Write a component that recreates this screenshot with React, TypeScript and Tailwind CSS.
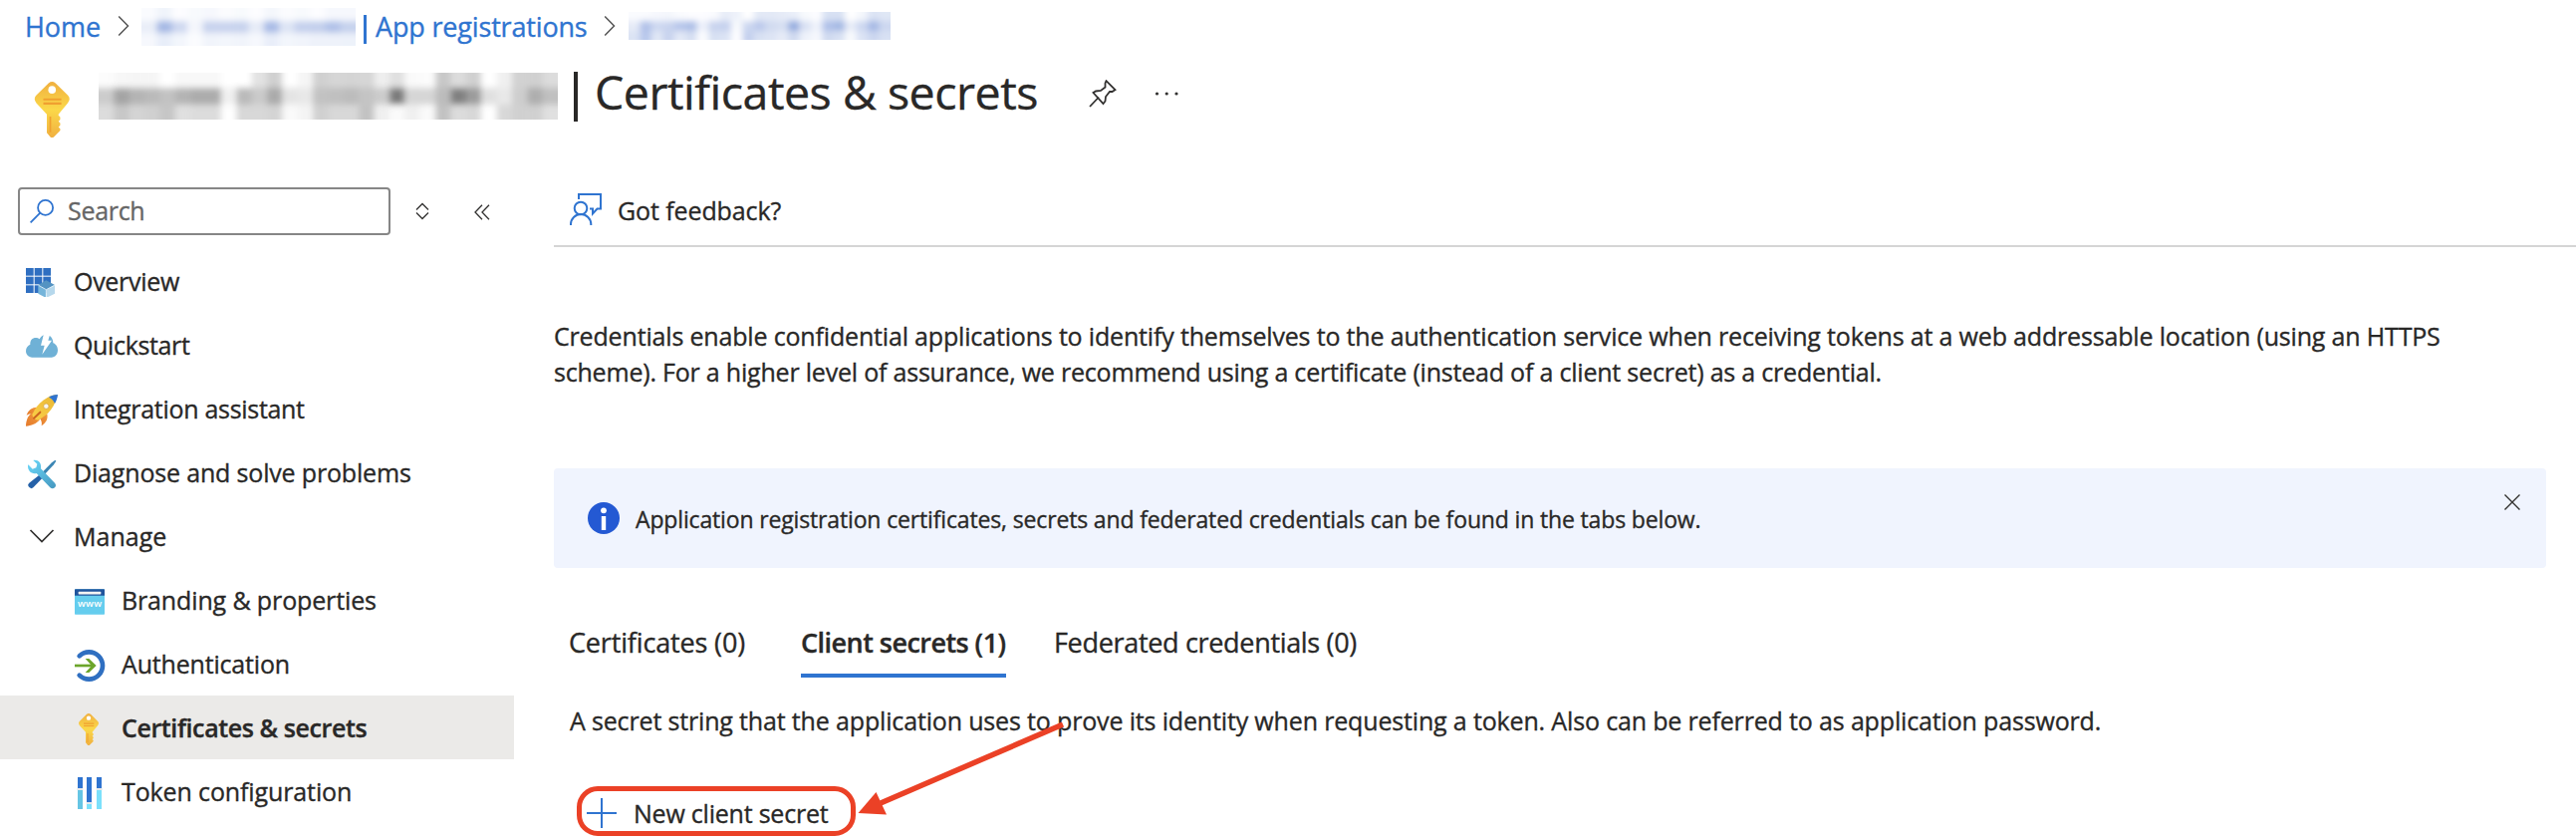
import type { ReactNode } from "react";

const BLUE = "#2f74d0";

function KeyIcon({ className }: { className: string }) {
  return (
    <svg viewBox="18 402 96 96" className={className}>
      <defs>
        <linearGradient id="keyFill" x1="0" y1="0" x2="0" y2="1">
          <stop offset="0" stopColor="#f0b040" />
          <stop offset="0.5" stopColor="#fbd849" />
          <stop offset="1" stopColor="#f0b040" />
        </linearGradient>
      </defs>
      <path
        fill="url(#keyFill)"
        d="M57 404.500Q63 399.500 69 404.500L90 425Q96 431 90 439L74 458V460L77 463V467L74 470L77 473V477L74 480L77 483V486L66 497Q63 499 60 497L54 490V458L36 439Q30 431 36 425Z"
      />
      <ellipse cx="63" cy="416" rx="6.500" ry="6.500" fill="#fff" />
      <path d="M48 432.500H79M48 439.500H79" stroke="#f0a030" strokeWidth="3.500" />
      <path d="M60 462V489" stroke="#f0a030" strokeWidth="3" />
    </svg>
  );
}

function OverviewIcon() {
  return (
    <svg viewBox="30 12 96 96" className="size-8">
      {[0, 1, 2].map((r) =>
        [0, 1, 2].map((c) => (
          <rect key={`${r}${c}`} x={30 + c * 26} y={21 + r * 26} width="23" height="23" fill="#2f6fc1" />
        ))
      )}
      <path d="M91 58L117 72L91 86L67 72Z" fill="#5493c2" />
      <path d="M67 72L91 86V111L67 98Z" fill="#74b4da" />
      <path d="M117 72L91 86V111L117 98Z" fill="#b6d8ec" />
      <path d="M68 73L91 86L116 73M91 86V110" stroke="#e8f4fa" strokeWidth="2.500" fill="none" />
    </svg>
  );
}

function QuickstartIcon() {
  return (
    <svg viewBox="30 204 96 96" className="size-8">
      <path
        fill="#6fb1d6"
        d="M49 290C38 290 30 282 30 271C30 261 36 254 43 251C42 239 49 231 60 231C64 231 68 232 71 235C75 226 82 222 90 222C103 222 112 232 112 247C120 249 126 258 126 268C126 281 118 290 107 290Z"
      />
      <path fill="#fff" d="M84 219H103L97 239H108L79 281L86 254H75Z" />
    </svg>
  );
}

function RocketIcon() {
  return (
    <svg viewBox="30 396 96 96" className="size-8 overflow-visible">
      <defs>
        <linearGradient id="rocketFin" x1="1" y1="0" x2="0" y2="1">
          <stop offset="0" stopColor="#f09a3c" />
          <stop offset="1" stopColor="#e57a2c" />
        </linearGradient>
        <linearGradient id="rocketBody" x1="1" y1="0" x2="0" y2="1">
          <stop offset="0" stopColor="#e8b634" />
          <stop offset="1" stopColor="#fbd048" />
        </linearGradient>
      </defs>
      <path fill="url(#rocketFin)" d="M72 441C54 437 38 445 32 464C42 459 50 459 60 463Z" />
      <path fill="url(#rocketFin)" d="M94 460C97 474 92 487 77 496C79 486 77 479 70 472Z" />
      <path fill="url(#rocketFin)" d="M50 456C35 465 30 482 30 497C46 496 62 490 72 477Z" />
      <path fill="url(#rocketBody)" d="M125 402C98 404 66 424 49 462C50 471 56 478 66 479C98 464 120 434 125 402Z" />
      <path fill={BLUE} d="M126 402C115 402 106 405 99 410C107 413 114 420 117 429C122 421 125 412 126 402Z" />
      <circle cx="91" cy="437" r="8" fill="#f7f5ef" stroke="#d39b2a" strokeWidth="2" />
      <path d="M54 473L73 455" stroke="#cc6420" strokeWidth="6" strokeLinecap="round" />
    </svg>
  );
}

function ToolsIcon() {
  return (
    <svg viewBox="30 588 96 96" className="size-8 overflow-visible">
      <defs>
        <linearGradient id="wrenchFill" x1="0" y1="0" x2="1" y2="1">
          <stop offset="0" stopColor="#6bd8fa" />
          <stop offset="1" stopColor="#4597bf" />
        </linearGradient>
      </defs>
      <path d="M118 599L121 602L114 613L84 645L77 638L108 607Z" fill="#3b86b4" />
      <path d="M73 642L82 651L52 682Q47 687 41 682L38 679Q34 674 39 669Z" fill="#2561a8" />
      <path
        fill="url(#wrenchFill)"
        d="M52 600C66 597 78 608 75 625L117 668Q123 675 117 682Q110 688 103 682L62 639C48 643 35 632 36 616L37 613L50 626L61 622L64 611Z"
      />
    </svg>
  );
}

function BrandingIcon() {
  return (
    <svg viewBox="18 12 96 96" className="size-8">
      <rect x="21" y="28" width="90" height="76" rx="2" fill="#65cdee" />
      <path d="M23 28H109Q111 28 111 30V47H21V30Q21 28 23 28Z" fill="#20549c" />
      <rect x="32" y="35.500" width="68" height="8" rx="2" fill="#f4f4f4" />
      <text x="66" y="81" textAnchor="middle" fontSize="29" fontWeight="600" fill="#fff" fontFamily="Open Sans, sans-serif" textLength="72">
        www
      </text>
    </svg>
  );
}

function AuthenticationIcon() {
  return (
    <svg viewBox="18 204 96 96" className="size-8 overflow-visible">
      <path d="M35 229A41 41 0 1 1 35 287" fill="none" stroke="#2f6fc1" strokeWidth="14" strokeLinecap="round" />
      <path d="M21 258H78" stroke="#6ca52b" strokeWidth="8" />
      <path d="M53 237H64L86 258L64 279H53L72 258Z" fill="#6ca52b" />
    </svg>
  );
}

function TokenIcon() {
  return (
    <svg viewBox="18 588 96 96" className="size-8 overflow-visible">
      <rect x="30" y="594" width="15" height="34" fill={BLUE} />
      <rect x="30" y="632" width="15" height="58" fill="#66c5e4" />
      <rect x="57" y="594" width="15" height="76" fill={BLUE} />
      <rect x="57" y="675" width="15" height="15" fill="#7be0fb" />
      <rect x="87" y="594" width="15" height="34" fill={BLUE} />
      <rect x="87" y="632" width="15" height="58" fill="#7be0fb" />
      <rect x="28" y="627" width="18" height="6" rx="1" fill="#e4e8ea" />
      <rect x="56" y="669" width="18" height="6" rx="1" fill="#e4e8ea" />
      <rect x="86" y="627" width="18" height="6" rx="1" fill="#e4e8ea" />
    </svg>
  );
}

function ManageChevron() {
  return (
    <svg viewBox="0 0 32 32" className="size-8">
      <path d="M4.500 10L16 21.500L27.500 10" fill="none" stroke="#323130" strokeWidth="1.700" />
    </svg>
  );
}

function BreadcrumbChevron() {
  return (
    <svg viewBox="0 0 12 20" className="h-5 w-3 shrink-0">
      <path d="M1.200 0.500L10.500 10L1.200 19.500" fill="none" stroke="#555" strokeWidth="1.500" />
    </svg>
  );
}

/* Name hidden behind a coarse mosaic. Each row is a list of tile colours. */
function Mosaic({ id, width, heights, rows, className }: { id: string; width: number; heights: number[]; rows: string[][]; className: string }) {
  const total = heights.reduce((a, b) => a + b, 0);
  return (
    <svg viewBox={`0 0 ${width} ${total}`} className={className}>
      <filter id={id} x="0" y="0" width="100%" height="100%">
        <feGaussianBlur stdDeviation="3" />
      </filter>
      <g filter={`url(#${id})`}>
        {rows.map((row, r) => {
          const y = heights.slice(0, r).reduce((a, b) => a + b, 0);
          const first = r === 0;
          const last = r === rows.length - 1;
          const w = width / row.length;
          return row.map((color, c) => (
            <rect
              key={`${r}-${c}`}
              x={c * w - (c === 0 ? 10 : 0)}
              y={y - (first ? 10 : 0)}
              width={w + 0.5 + (c === 0 || c === row.length - 1 ? 10 : 0)}
              height={heights[r] + 0.5 + (first || last ? 10 : 0)}
              fill={`#${color}`}
            />
          ));
        })}
      </g>
    </svg>
  );
}

const gray = (s: string) => s.split(" ").map((v) => v + v + v);
const tiles = (s: string) => s.split(" ");

const titleRows = [
  gray("fc f7 f5 f5 ff f8 f8 f8 ff ff e2 d0 ff f5 d0 d6 d4 d6 ee e0 fa fc c8 dc d0 ff f0 d2 d0 dc"),
  gray("cc a4 b4 ba c2 b4 ac ac f0 ba ca aa e4 e8 c2 c0 bc c4 cc 7a d6 d6 bc 80 9c e0 e8 ce ae c0"),
  gray("dc c8 d4 d0 c6 e0 dc dc ff d8 d8 d4 fa f4 d0 d8 d8 c2 f0 fa f0 fa c2 dc d8 ff d8 d0 d0 e0"),
];
const tenantRows = [
  tiles("fafbfe f0f4fb fdfdff f8fafd f6f8fd fbfcfe f8fafd fdfdff f4f7fc fbfcfe f8fafd fdfdff f6f8fd f6f8fd"),
  tiles("e9eef8 a4b8e4 ced8f0 f4f6fc c8d3ee c8d3ee c6d2ed e6ebf7 a8bbe6 dde4f4 c4d0ed c2cfec b0c1e8 c5d1ed"),
  tiles("f6f8fd e8eef9 f3f6fc fbfcfe f1f4fb f3f6fc f1f4fb f6f8fd e9eef9 f3f6fc f1f4fb eef2fa eef2fa edf2fa"),
];
const appRows = [
  tiles("fafbfe fafbfe f6f8fd f4f7fc fafbfe fdfdff fdfdff fafbfe e8edf8 eef2fa ffffff e3e9f6 e3e9f6 e6ebf7 eaeff9 f8fafd fdfdff d8e1f3 d8e1f3 ffffff f4f7fc dbe3f4 e0e7f5"),
  tiles("e6ebf7 b0c1e8 ccd7f0 c8d3ee b4c4ea aabde6 ecf0fa c8d3ee c4d0ee f8fafd ccd7f0 bac8eb d0daf0 d6dff2 92aade d8e0f3 eef2fa aec0e8 a2b7e3 e6ebf7 ccd7f0 a4b8e4 ccd7f0"),
  tiles("dbe3f4 b8c7eb e0e7f5 c8d3ee e3e9f6 d6dff2 fbfcfe d8e1f3 dbe3f4 fdfdff c4d0ee d8e1f3 dde4f4 e6ebf7 d0daf0 eef2fa f6f8fd d0daf0 d8e1f3 f8fafd dbe3f4 ccd7f0 d8e1f3"),
];

function NavItem({ icon, label, track, indent, selected }: { icon: ReactNode; label: string; track: string; indent?: boolean; selected?: boolean }) {
  return (
    <a
      className={`flex h-16 items-center gap-4 whitespace-nowrap text-[25px] ${indent ? "pl-[74px]" : "pl-[26px]"} ${
        selected ? "bg-[#ebeae8] font-semibold" : ""
      }`}
    >
      <span className="flex size-8 shrink-0 items-center justify-center">{icon}</span>
      <span className={`pt-0.5 ${track}`}>{label}</span>
    </a>
  );
}

function Header() {
  return (
    <header className="h-[188px]">
      <nav className="flex h-[52px] items-center whitespace-nowrap pl-[25px] text-[27px] text-[#2f74d0]">
        <a className="w-[93px] pt-0.5 tracking-[-0.08px]">Home</a>
        <BreadcrumbChevron />
        <Mosaic id="tenantBlur" width={215} heights={[13, 12, 13]} rows={tenantRows} className="ml-3 mt-0.5 h-[38px] w-[215px] shrink-0" />
        <span className="ml-2 mt-1.5 h-[29px] w-[3px] shrink-0 bg-[#2f74d0]" />
        <a className="ml-[9px] w-[229px] pt-0.5 tracking-[-0.17px]">App registrations</a>
        <BreadcrumbChevron />
        <Mosaic id="appBlur" width={263} heights={[9, 10, 9]} rows={appRows} className="ml-[13px] h-7 w-[263px] shrink-0" />
      </nav>
      <div className="flex h-20 items-center whitespace-nowrap pl-[26px]">
        <KeyIcon className="mt-9 size-14 shrink-0" />
        <Mosaic id="titleBlur" width={461} heights={[15, 17, 15]} rows={titleRows} className="ml-[17px] mt-[9px] h-[47px] w-[461px] shrink-0" />
        <span className="ml-4 mt-[10px] h-[50px] w-1 shrink-0 bg-[#292827]" />
        <h1 className="ml-[17px] w-[496px] text-[46.5px] leading-20 tracking-[-0.48px]">Certificates &amp; secrets</h1>
        <svg viewBox="0 0 28 28" className="mt-1 size-7 shrink-0">
          <path
            d="M1 27L10 17.500M17.500 1.200L26.500 10L23.500 12L21 12L17 17L16.500 21.500L14.500 24L4.500 13L7 11.500L12 11L16.500 7.500L16.500 3.500Z"
            fill="none"
            stroke="#323130"
            strokeWidth="1.800"
          />
        </svg>
        <svg viewBox="0 0 24 6" className="ml-[38px] mt-1 h-1.5 w-6 shrink-0" fill="#323130">
          <circle cx="2.500" cy="3" r="1.600" />
          <circle cx="12.200" cy="3" r="1.600" />
          <circle cx="22" cy="3" r="1.600" />
        </svg>
      </div>
    </header>
  );
}

function Sidebar() {
  return (
    <aside className="w-[516px] shrink-0">
      <div className="mb-3.5 flex h-12 items-center pl-[18px]">
        <div className="flex h-12 w-[374px] items-center rounded-[4px] border-2 border-[#868686] pl-2.5">
          <svg viewBox="0 0 24 24" className="size-6" fill="none" stroke={BLUE} strokeWidth="1.800">
            <circle cx="15.600" cy="8.400" r="7.500" />
            <path d="M10.300 13.700L0.600 23.400" />
          </svg>
          <span className="ml-3.5 text-[25px] tracking-[-0.3px] text-[#666]">Search</span>
        </div>
        <svg viewBox="0 0 14 18" className="ml-[25px] h-[18px] w-3.5" fill="none" stroke="#323130" strokeWidth="1.300">
          <path d="M1 7.500L7 1.500L13 7.500M1 10.500L7 16.500L13 10.500" />
        </svg>
        <svg viewBox="0 0 16 16" className="ml-[45px] mt-0.5 size-4" fill="none" stroke="#323130" strokeWidth="1.300">
          <path d="M8 0.800L1 8L8 15.200M15 0.800L8 8L15 15.200" />
        </svg>
      </div>
      <NavItem icon={<OverviewIcon />} label="Overview" track="tracking-[-0.3px]" />
      <NavItem icon={<QuickstartIcon />} label="Quickstart" track="tracking-[-0.35px]" />
      <NavItem icon={<RocketIcon />} label="Integration assistant" track="tracking-[-0.3px]" />
      <NavItem icon={<ToolsIcon />} label="Diagnose and solve problems" track="tracking-[-0.17px]" />
      <NavItem icon={<ManageChevron />} label="Manage" track="tracking-[0.02px]" />
      <NavItem indent icon={<BrandingIcon />} label="Branding & properties" track="tracking-[-0.13px]" />
      <NavItem indent icon={<AuthenticationIcon />} label="Authentication" track="tracking-[-0.18px]" />
      <NavItem indent selected icon={<KeyIcon className="mt-1 size-8 shrink-0" />} label="Certificates & secrets" track="tracking-[-0.4px]" />
      <NavItem indent icon={<TokenIcon />} label="Token configuration" track="tracking-[-0.12px]" />
    </aside>
  );
}

function Main() {
  return (
    <main className="ml-10 min-w-0 flex-1">
      <div className="flex h-[60px] items-start border-b-2 border-[#d5d5d5] pl-4">
        <div className="flex h-12 items-center whitespace-nowrap text-[25px]">
          <svg viewBox="0 0 32 32" className="-mt-1 size-8" fill="none" stroke={BLUE} strokeWidth="2">
            <circle cx="11" cy="15" r="6.300" />
            <path d="M1 32V31A10.150 10 0 0 1 21.300 31V32" />
            <path d="M9 6V1H31V15.500H27.500L23 20.500V15.500H20" />
          </svg>
          <span className="ml-4 tracking-[-0.1px]">Got feedback?</span>
        </div>
      </div>
      <p className="mt-[71px] whitespace-nowrap text-[25px] leading-9">
        <span className="tracking-[-0.17px]">
          Credentials enable confidential applications to identify themselves to the authentication service when receiving tokens at a web addressable location (using an HTTPS
        </span>
        <br />
        <span className="tracking-[-0.205px]">
          scheme). For a higher level of assurance, we recommend using a certificate (instead of a client secret) as a credential.
        </span>
      </p>
      <div className="mt-[79px] flex h-[100px] w-[2000px] items-center whitespace-nowrap rounded-[4px] bg-[#f0f4fe] pl-[34px] pr-[26px]">
        <svg viewBox="0 0 32 32" className="size-8">
          <circle cx="16" cy="16" r="16" fill="#2459d3" />
          <circle cx="16" cy="8.300" r="2.900" fill="#fff" />
          <rect x="13.800" y="14" width="4.400" height="14" fill="#fff" />
        </svg>
        <span className="ml-4 flex-1 pt-0.5 text-[23px] tracking-[-0.15px]">
          Application registration certificates, secrets and federated credentials can be found in the tabs below.
        </span>
        <svg viewBox="0 0 16 16" className="mb-8 size-4" stroke="#323130" strokeWidth="1.400">
          <path d="M0.500 0.500L15.500 15.500M15.500 0.500L0.500 15.500" />
        </svg>
      </div>
      <div className="mt-[45px] flex h-[65px] whitespace-nowrap pl-[15px] text-[27px] leading-[60px]">
        <span className="w-[233px] tracking-[-0.157px]">Certificates (0)</span>
        <span className="w-[206px] border-b-4 border-[#2f74d0] font-semibold tracking-[-0.54px]">Client secrets (1)</span>
        <span className="ml-12 tracking-[-0.32px]">Federated credentials (0)</span>
      </div>
      <p className="mt-[25px] whitespace-nowrap pl-4 text-[25px] leading-9 tracking-[-0.158px]">
        A secret string that the application uses to prove its identity when requesting a token. Also can be referred to as application password.
      </p>
      <div className="relative ml-[23px] mt-12 flex h-[50px] w-[280px] items-center whitespace-nowrap rounded-[21px] border-[5px] border-[#eb4126] pl-[5px] text-[25px]">
        <svg viewBox="0 0 30 30" className="mt-1 size-[30px] shrink-0" stroke={BLUE} strokeWidth="2">
          <path d="M15 0V30M0 15H30" />
        </svg>
        <span className="ml-[17px] pt-1.5 tracking-[-0.22px]">New client secret</span>
        <svg viewBox="0 0 210 96" className="absolute -top-[71px] left-[276px] h-24 w-[210px]">
          <path d="M207 4L24 83" stroke="#eb4126" strokeWidth="5.500" />
          <path d="M1.500 93L19.500 72L30 94.500Z" fill="#eb4126" />
        </svg>
      </div>
    </main>
  );
}

export default function App() {
  return (
    <div className="h-[840px] w-[2586px] overflow-hidden bg-white font-['Open_Sans','Noto_Sans',sans-serif] text-[#292827] [-webkit-text-stroke:0.35px_currentColor]">
      <Header />
      <div className="flex">
        <Sidebar />
        <Main />
      </div>
    </div>
  );
}
